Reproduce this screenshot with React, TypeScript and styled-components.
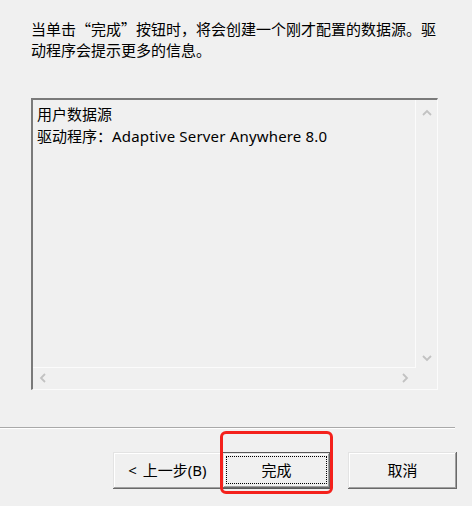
import React from "react";
import styled, { createGlobalStyle } from "styled-components";

const GlobalStyle = createGlobalStyle`
  html, body {
    margin: 0;
    padding: 0;
    background: #f0f0f0;
  }
`;

const CJK = `"Noto Sans CJK SC", "Microsoft YaHei", sans-serif`;
const LATIN = `"Noto Sans", "Open Sans", sans-serif`;

const Dialog = styled.div`
  position: relative;
  width: 472px;
  height: 506px;
  overflow: hidden;
  background: #f0f0f0;
  display: flex;
  flex-direction: column;
  font-family: ${CJK};
  font-size: 15px;
  color: #000;
`;

const Intro = styled.p`
  margin: 18px 0 0 31px;
  width: 407px;
  line-height: 21px;
`;

const Latin = styled.span<{ $spacing?: number }>`
  font-family: ${LATIN};
  letter-spacing: ${(p) => p.$spacing ?? 0}px;
`;

const ListBox = styled.div`
  margin: 38px 0 0 31px;
  width: 407px;
  height: 292px;
  box-sizing: border-box;
  border-style: solid;
  border-width: 2px 1px 1px 2px;
  border-color: #7a7a7a #fbfbfb #fbfbfb #7a7a7a;
  display: grid;
  grid-template-columns: 1fr 21px;
  grid-template-rows: 1fr 21px;
`;

const ListContent = styled.div`
  padding: 3px 4px;
  line-height: 21.5px;
  border-right: 1px solid #fbfbfb;
  border-bottom: 1px solid #fbfbfb;
  white-space: nowrap;
  overflow: hidden;
`;

const VScroll = styled.div`
  display: flex;
  flex-direction: column;
  justify-content: space-between;
  align-items: center;
  padding: 9px 0 6px;
`;

const HScroll = styled.div`
  display: flex;
  justify-content: space-between;
  align-items: center;
  padding: 0 7px 2px 6px;
`;

const Corner = styled.div``;

const Separator = styled.div`
  margin-top: 37px;
  width: 455px;
  border-top: 1px solid #a9a9a9;
  border-bottom: 1px solid #ffffff;
`;

const ButtonRow = styled.div`
  margin: 23px 0 0 113px;
  display: flex;
`;

const Button = styled.button<{ $gapLeft?: number }>`
  width: 109px;
  height: 37px;
  margin-left: ${(p) => p.$gapLeft ?? 0}px;
  padding: 0 0 2px;
  border: none;
  background: #f0f0f0;
  font-family: ${CJK};
  font-size: 15px;
  color: #000;
  white-space: pre;
  box-shadow: inset -1px -1px #696969, inset 1px 1px #e3e3e3,
    inset -2px -2px #a0a0a0, inset 2px 2px #ffffff;
`;

const DefaultButton = styled(Button)`
  position: relative;
  border: 1px solid #5a5a5a;
  &::after {
    content: "";
    position: absolute;
    left: 3px;
    top: 3px;
    right: 3px;
    bottom: 4px;
    border: 1px dotted #000;
  }
`;

const Highlight = styled.div`
  position: absolute;
  left: 220px;
  top: 431px;
  width: 113px;
  height: 63px;
  box-sizing: border-box;
  border: 3px solid #f4211c;
  border-radius: 6px;
  pointer-events: none;
`;

type Dir = "up" | "down" | "left" | "right";

const Chevron = ({ dir }: { dir: Dir }) => {
  const pts: Record<Dir, string> = {
    up: "1,6 5,2 9,6",
    down: "1,2 5,6 9,2",
    left: "6,1 2,5 6,9",
    right: "2,1 6,5 2,9",
  };
  const vertical = dir === "up" || dir === "down";
  return (
    <svg
      width={vertical ? 10 : 8}
      height={vertical ? 8 : 10}
      viewBox={vertical ? "0 0 10 8" : "0 0 8 10"}
    >
      <polyline
        points={pts[dir]}
        fill="none"
        stroke="#c2c2c2"
        strokeWidth="1.8"
      />
    </svg>
  );
};

export default function App() {
  return (
    <>
      <GlobalStyle />
      <Dialog>
        <Intro>
          当单击“完成”按钮时，将会创建一个刚才配置的数据源。驱动程序会提示更多的信息。
        </Intro>
        <ListBox>
          <ListContent>
            用户数据源
            <br />
            驱动程序：<Latin $spacing={0.18}>Adaptive Server Anywhere 8.0</Latin>
          </ListContent>
          <VScroll>
            <Chevron dir="up" />
            <Chevron dir="down" />
          </VScroll>
          <HScroll>
            <Chevron dir="left" />
            <Chevron dir="right" />
          </HScroll>
          <Corner />
        </ListBox>
        <Separator />
        <ButtonRow>
          <Button>
            <Latin $spacing={1}>{"< "}</Latin>上一步<Latin>(B)</Latin>
          </Button>
          <DefaultButton>完成</DefaultButton>
          <Button $gapLeft={17}>取消</Button>
        </ButtonRow>
        <Highlight />
      </Dialog>
    </>
  );
}
